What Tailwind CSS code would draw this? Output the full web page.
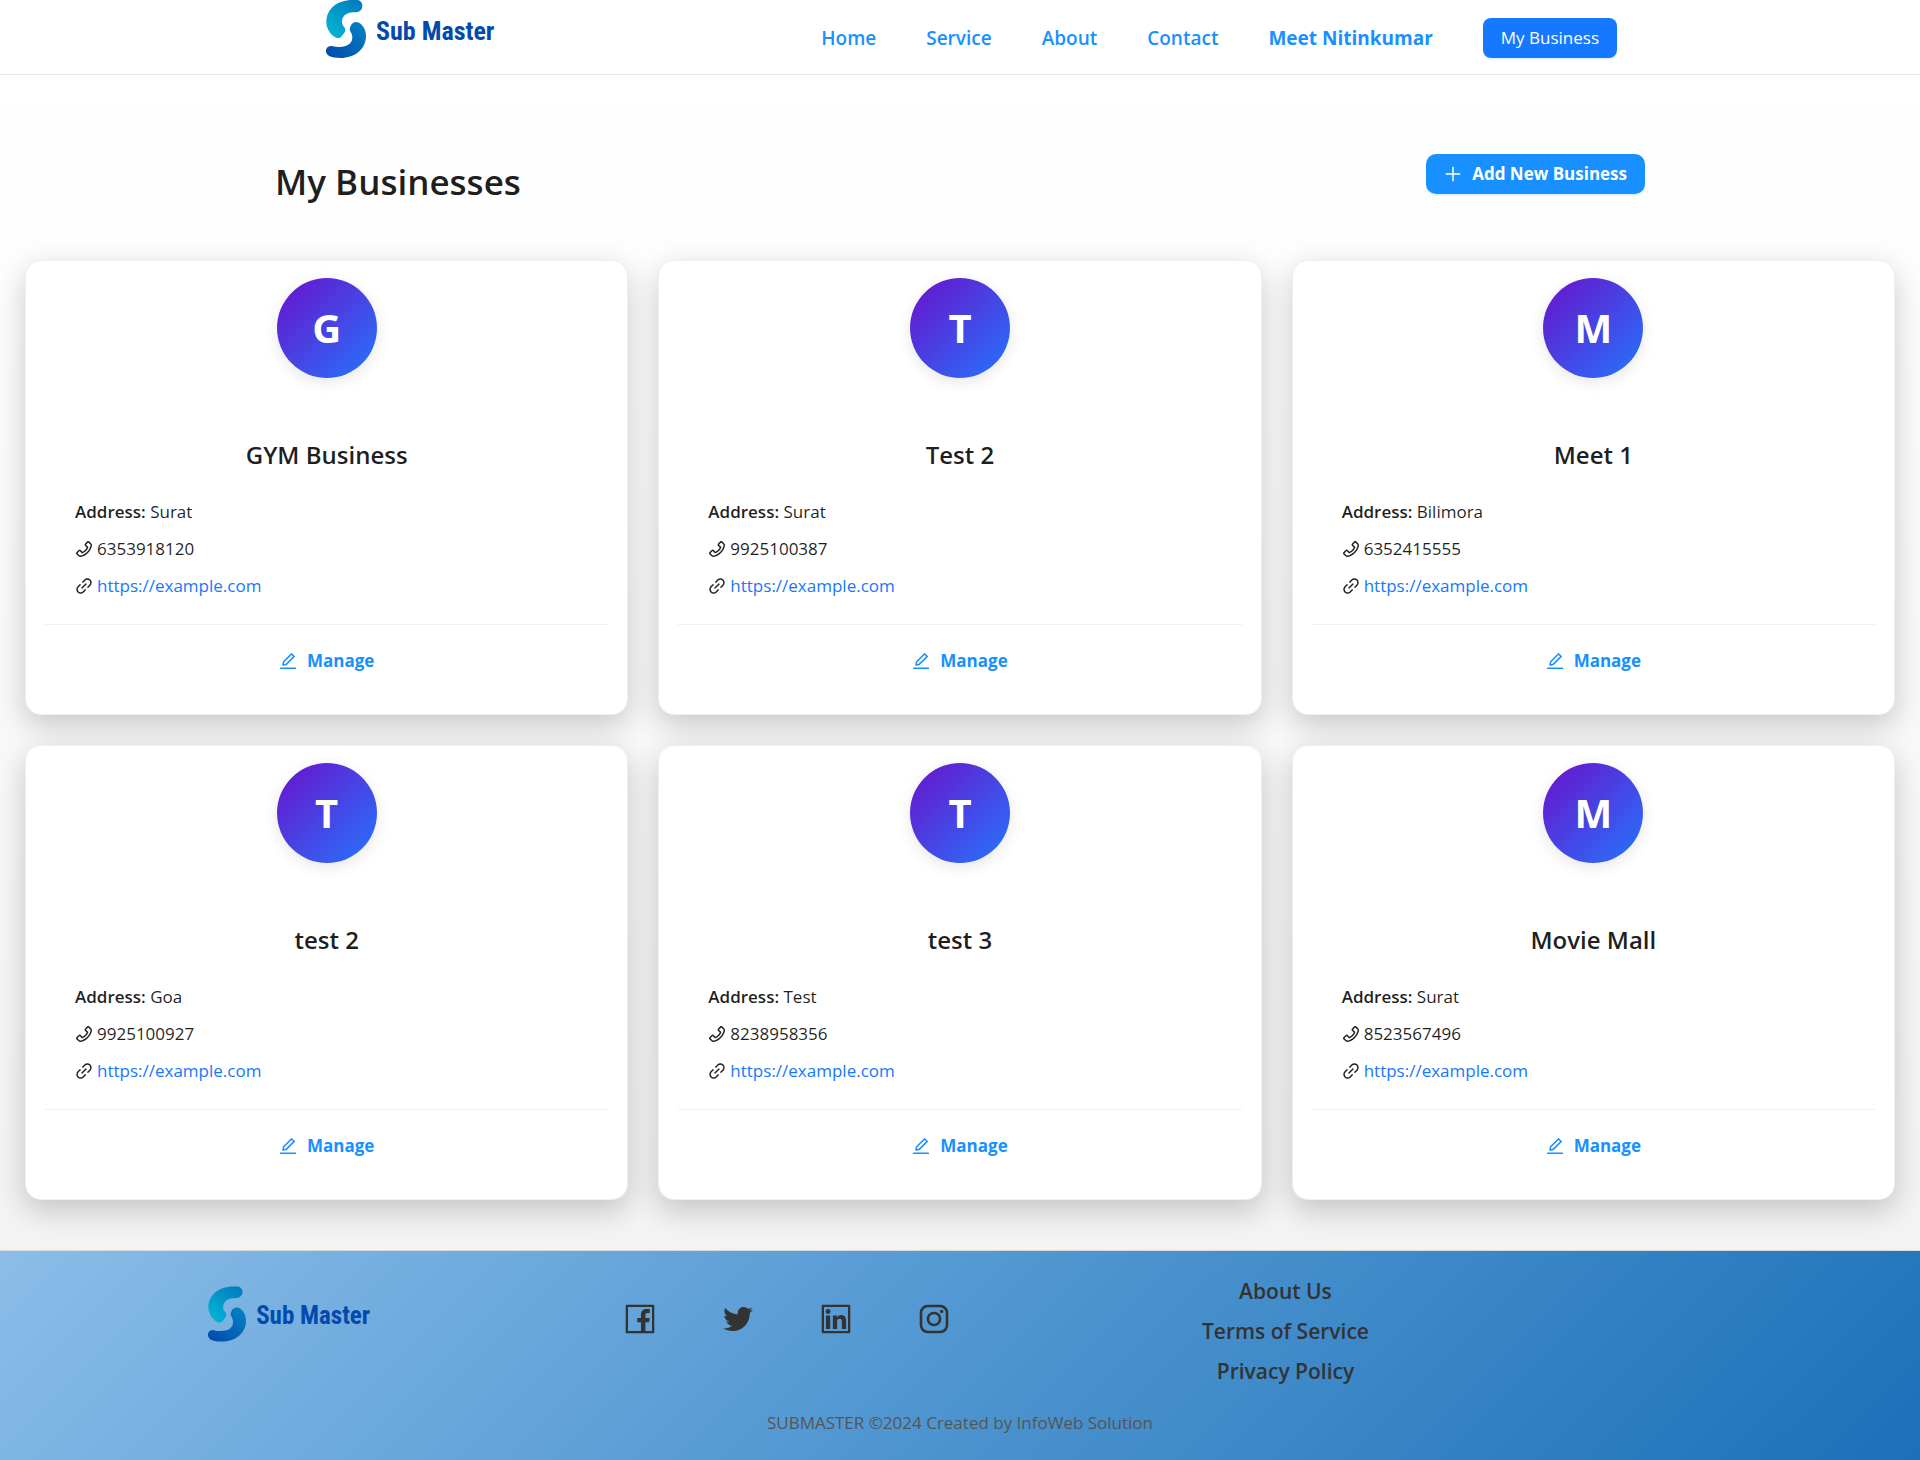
<!DOCTYPE html>
<html lang="en">
<head>
<meta charset="utf-8">
<meta name="viewport" content="width=device-width, initial-scale=1">
<title>Sub Master - My Businesses</title>
<script src="https://cdn.jsdelivr.net/npm/@tailwindcss/browser@4"></script>
</head>
<body class="flex min-h-screen flex-col bg-white font-['Segoe_UI','Open_Sans','Noto_Sans',sans-serif] text-[17px] text-black/88">
<svg class="absolute size-0" aria-hidden="true">
  <defs>
    <linearGradient id="logo-top" x1="1" y1="0" x2="0.2" y2="1"><stop offset="0" stop-color="#0278bd"/><stop offset="1" stop-color="#04b4d4"/></linearGradient>
    <linearGradient id="logo-bottom" x1="1" y1="0" x2="0" y2="1"><stop offset="0" stop-color="#0585c4"/><stop offset="1" stop-color="#0347ac"/></linearGradient>
  </defs>
  <symbol id="logo" viewBox="0 0 120 174">
    <path fill="url(#logo-top)" d="M80 0C32 0 1 28 1 66c0 22 14 38 25 45 7 5 15 4 19 0l10-13c4-6 4-12-1-18C43 70 45 38 82 37c16 1 27-6 27-20C109 6 101 0 91 0Z"/>
    <path fill="url(#logo-bottom)" d="M74 78c5-11 14-14 25-10 14 8 21 24 21 40 0 38-32 66-77 66-13 0-24-1-32-5C3 165-1 158 0 150c2-9 9-13 18-12 15 4 30 3 41 0 20-6 25-26 15-42-4-6-3-12 0-18Z"/>
  </symbol>
  <symbol id="phone" viewBox="64 64 896 896"><path d="M877.1 238.7L770.6 132.3c-13-13-30.4-20.3-48.8-20.3s-35.8 7.2-48.8 20.3L558.3 246.8c-13 13-20.3 30.5-20.3 48.9 0 18.5 7.2 35.8 20.3 48.9l89.6 89.7a405.46 405.46 0 01-86.4 127.3c-36.7 36.9-79.6 66-127.2 86.6l-89.6-89.7c-13-13-30.4-20.3-48.8-20.3a68.2 68.2 0 00-48.8 20.3L132.3 673c-13 13-20.3 30.5-20.3 48.9 0 18.5 7.2 35.8 20.3 48.9l106.4 106.4c22.2 22.2 52.8 34.9 84.2 34.9 6.5 0 12.8-.5 19.2-1.6 132.4-21.8 263.8-92.3 369.9-198.3C818 606 888.4 474.6 910.4 342.1c6.3-37.6-6.3-76.3-33.3-103.4zm-37.6 91.5c-19.5 117.9-82.9 235.5-178.4 331s-213 158.9-330.9 178.4c-14.8 2.5-30-2.5-40.8-13.2L184.9 721.9 295.7 611l119.8 120 .9.9 21.6-8a481.29 481.29 0 00285.7-285.8l8-21.6-120.8-120.7 110.8-110.9 104.5 104.5c10.8 10.8 15.8 26 13.3 40.8z"/></symbol>
  <symbol id="link" viewBox="64 64 896 896"><path d="M574 665.4a8.03 8.03 0 00-11.3 0L446.5 781.6c-53.8 53.8-144.6 59.5-204 0-59.5-59.5-53.8-150.2 0-204l116.2-116.2c3.1-3.1 3.1-8.2 0-11.3l-39.8-39.8a8.03 8.03 0 00-11.3 0L191.4 526.5c-84.6 84.6-84.6 221.5 0 306s221.5 84.6 306 0l116.2-116.2c3.1-3.1 3.1-8.2 0-11.3L574 665.4zm258.6-474c-84.6-84.6-221.5-84.6-306 0L410.3 307.6a8.03 8.03 0 000 11.3l39.7 39.7c3.1 3.1 8.2 3.1 11.3 0l116.2-116.2c53.8-53.8 144.6-59.5 204 0 59.5 59.5 53.8 150.2 0 204L665.3 562.6a8.03 8.03 0 000 11.3l39.8 39.8c3.1 3.1 8.2 3.1 11.3 0l116.2-116.2c84.5-84.6 84.5-221.5 0-306.1zM610.1 372.3a8.03 8.03 0 00-11.3 0L372.3 598.7a8.03 8.03 0 000 11.3l39.6 39.6c3.1 3.1 8.2 3.1 11.3 0l226.4-226.4c3.1-3.1 3.1-8.2 0-11.3l-39.5-39.6z"/></symbol>
  <symbol id="edit" viewBox="64 64 896 896"><path d="M257.7 752c2 0 4-.2 6-.5L431.9 722c2-.4 3.9-1.3 5.3-2.8l423.9-423.9a9.96 9.96 0 000-14.1L694.9 114.9c-1.9-1.9-4.4-2.9-7.1-2.9s-5.2 1-7.1 2.9L256.8 538.8c-1.5 1.5-2.4 3.3-2.8 5.3l-29.5 168.2a33.5 33.5 0 009.4 29.8c6.6 6.4 14.9 9.9 23.8 9.9zm67.4-174.4L687.8 215l73.3 73.3-362.7 362.6-88.9 15.7 15.6-89zM880 836H144c-17.7 0-32 14.3-32 32v36c0 4.4 3.6 8 8 8h784c4.4 0 8-3.6 8-8v-36c0-17.7-14.3-32-32-32z"/></symbol>
  <symbol id="plus" viewBox="64 64 896 896"><path d="M482 152h60q8 0 8 8v704q0 8-8 8h-60q-8 0-8-8V160q0-8 8-8z"/><path d="M160 474h704q8 0 8 8v60q0 8-8 8H160q-8 0-8-8v-60q0-8 8-8z"/></symbol>
  <symbol id="facebook" viewBox="64 64 896 896"><path d="M880 112H144c-17.7 0-32 14.3-32 32v736c0 17.7 14.3 32 32 32h736c17.7 0 32-14.3 32-32V144c0-17.7-14.3-32-32-32zm-32 736H663.9V602.2h104l15.6-120.7H663.9v-77.1c0-35 9.7-58.8 59.8-58.8h63.9v-108c-11.1-1.5-49-4.8-93.2-4.8-92.2 0-155.3 56.3-155.3 159.6v89H434.9v120.7h104.3V848H176V176h672v672z"/></symbol>
  <symbol id="twitter" viewBox="64 64 896 896"><path d="M928 254.3c-30.6 13.2-63.9 22.7-98.2 26.4a170.1 170.1 0 0075-94 336.64 336.64 0 01-108.2 41.2A170.1 170.1 0 00672 174c-94.5 0-170.5 76.6-170.5 170.6 0 13.2 1.6 26.4 4.2 39.1-141.5-7.4-267.7-75-351.6-178.5a169.32 169.32 0 00-23.2 86.1c0 59.2 30.1 111.4 76 142.1a172 172 0 01-77.1-21.7v2.1c0 82.9 58.6 151.6 136.7 167.4a180.6 180.6 0 01-44.9 5.8c-11.1 0-21.6-1.1-32.2-2.6C211 652 273.9 701.1 348.8 702.7c-58.6 45.9-132 72.9-211.7 72.9-14.3 0-27.5-.5-41.2-2.1C171.5 822 261.2 850 357.8 850 671.4 850 843 590.2 843 364.7c0-7.4 0-14.8-.5-22.2 33.2-24.3 62.3-54.4 85.5-88.2z"/></symbol>
  <symbol id="linkedin" viewBox="64 64 896 896">
    <rect x="144" y="144" width="736" height="736" fill="none" stroke="currentColor" stroke-width="64" stroke-linejoin="round"/>
    <circle cx="290" cy="304" r="69"/>
    <path d="M231 412h119v382H231zM424 412h114v52h2c16-30 55-62 113-62 120 0 142 79 142 182v210H676V608c0-44-1-101-62-101-62 0-71 48-71 98v189H424z"/>
  </symbol>
  <symbol id="instagram" viewBox="64 64 896 896">
    <rect x="148" y="148" width="728" height="728" rx="190" fill="none" stroke="currentColor" stroke-width="72"/>
    <circle cx="512" cy="512" r="170" fill="none" stroke="currentColor" stroke-width="72"/>
    <circle cx="726" cy="299" r="48"/>
  </symbol>
</svg>

<header class="border-b border-[#e5e7eb] bg-white">
  <div class="mx-auto flex h-[74px] max-w-[1314px] items-center justify-between pl-[23px]">
    <a href="#" class="flex items-center gap-[10px] self-start text-[#034aad]">
      <svg class="h-[58px] w-10" aria-hidden="true"><use href="#logo"/></svg>
      <span class="pt-1 font-['Roboto_Condensed','Liberation_Sans_Narrow','Roboto',sans-serif] text-[26px] leading-8 font-bold">Sub Master</span>
    </a>
    <nav class="flex items-center gap-[50px] pt-0.5 text-[19px] font-semibold text-[#1890ff]">
      <a href="#">Home</a>
      <a href="#">Service</a>
      <a href="#">About</a>
      <a href="#">Contact</a>
      <a href="#" class="font-bold">Meet Nitinkumar</a>
      <button type="button" class="h-10 rounded-lg bg-[#1677ff] px-[18px] text-[17px] font-normal text-white shadow-[0_2px_0_rgba(5,145,255,0.1)]">My Business</button>
    </nav>
  </div>
</header>

<main class="flex-1 bg-linear-to-b from-white to-[#f3f3f3] px-[25px] pt-[79px] pb-[50px]">
  <div class="mx-auto mb-[54px] flex max-w-[1370px] items-start justify-between">
    <h1 class="pt-1 text-[35px] leading-[48px] font-semibold">My Businesses</h1>
    <button type="button" class="flex h-10 items-center gap-[10px] rounded-[10px] bg-[#1890ff] px-[18px] font-bold text-white shadow-[0_2px_0_rgba(5,145,255,0.1)]">
      <svg class="size-[18px] fill-current" aria-hidden="true"><use href="#plus"/></svg>Add New Business
    </button>
  </div>
  <div id="cards" class="grid grid-cols-3 gap-[30px]"></div>
</main>

<footer class="border-t border-[#d9d9d9] bg-linear-[135deg,#8bbde8_0%,#4f96d1_50%,#1c70b8_100%] text-[#333]">
  <div class="grid h-[154px] grid-cols-[repeat(3,26.5%)] pl-10 pt-5">
    <a href="#" class="flex items-center justify-center gap-[10px] self-start pt-[15px] text-[#034aad]">
      <svg class="h-14 w-[38px]" aria-hidden="true"><use href="#logo"/></svg>
      <span class="pt-1 font-['Roboto_Condensed','Liberation_Sans_Narrow','Roboto',sans-serif] text-[25px] leading-8 font-bold">Sub Master</span>
    </a>
    <div class="flex items-start justify-center gap-[66px] pt-8">
      <a href="#" aria-label="Facebook"><svg class="size-8 fill-current"><use href="#facebook"/></svg></a>
      <a href="#" aria-label="Twitter"><svg class="size-8 fill-current"><use href="#twitter"/></svg></a>
      <a href="#" aria-label="LinkedIn"><svg class="size-8 fill-current"><use href="#linkedin"/></svg></a>
      <a href="#" aria-label="Instagram"><svg class="size-8 fill-current"><use href="#instagram"/></svg></a>
    </div>
    <nav class="flex flex-col items-center text-[21px] leading-10 font-semibold">
      <a href="#">About Us</a>
      <a href="#">Terms of Service</a>
      <a href="#">Privacy Policy</a>
    </nav>
  </div>
  <p class="pt-1 pb-[23px] text-center leading-7 text-[#555]">SUBMASTER ©2024 Created by InfoWeb Solution</p>
</footer>

<script>
  const businesses = [
    ["GYM Business", "Surat", "6353918120"],
    ["Test 2", "Surat", "9925100387"],
    ["Meet 1", "Bilimora", "6352415555"],
    ["test 2", "Goa", "9925100927"],
    ["test 3", "Test", "8238958356"],
    ["Movie Mall", "Surat", "8523567496"],
  ];
  document.getElementById("cards").innerHTML = businesses.map(([name, address, phone]) => `
    <article class="flex h-[455px] flex-col rounded-2xl border border-[#f0f0f0] bg-white px-[19px] pt-[17px] shadow-[0_10px_30px_rgba(0,0,0,0.2)]">
      <div class="flex size-[100px] shrink-0 items-center justify-center self-center rounded-full bg-linear-[135deg,#6a11cb_0%,#2575fc_100%] text-[40px] font-bold text-white shadow-[0_4px_15px_rgba(0,0,0,0.1)]">${name[0].toUpperCase()}</div>
      <h2 class="mt-[61px] text-center text-[24px] leading-8 font-semibold">${name}</h2>
      <div class="mt-[22px] px-[30px] leading-[37px]">
        <p><strong class="font-semibold">Address:</strong> ${address}</p>
        <p class="flex items-center gap-1"><svg class="size-[18px] fill-current" aria-hidden="true"><use href="#phone"/></svg>${phone}</p>
        <p class="flex items-center gap-1"><svg class="size-[18px] fill-current" aria-hidden="true"><use href="#link"/></svg><a href="https://example.com" class="text-[#1677ff]">https://example.com</a></p>
      </div>
      <div class="mt-5 flex justify-center border-t border-[#f0f0f0] pt-4">
        <button type="button" class="flex h-10 items-center gap-[10px] font-bold text-[#1890ff]"><svg class="size-[18px] fill-current" aria-hidden="true"><use href="#edit"/></svg>Manage</button>
      </div>
    </article>`).join("");
</script>
</body>
</html>
